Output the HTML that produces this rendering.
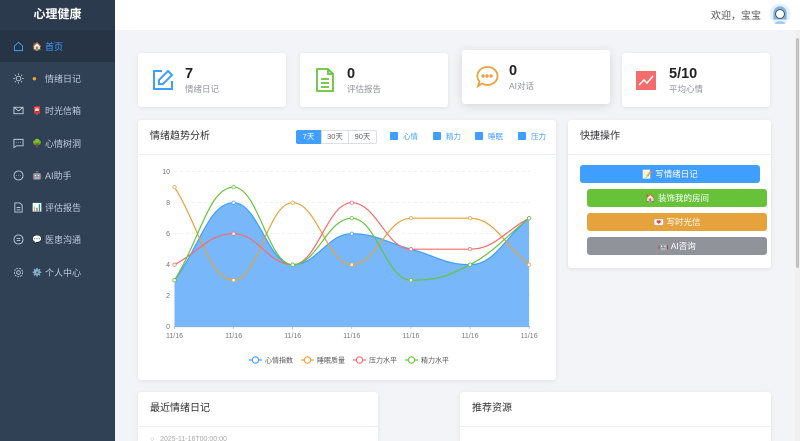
<!DOCTYPE html>
<html style="height:441px;overflow:hidden"><head><meta charset="utf-8">
<style>
*{margin:0;padding:0;box-sizing:border-box}
body{width:800px;height:441px;overflow:hidden;font-family:"Liberation Sans","Noto Sans CJK SC",sans-serif;background:#f3f4f7;position:relative;font-size:9px;color:#303133}
.side{position:absolute;left:0;top:0;width:115px;height:441px;background:#304156}
.logo{height:30px;background:#2b3a4d;color:#fff;font-weight:bold;font-size:12px;text-align:center;line-height:28px}
.mi{height:32.3px;display:flex;align-items:center;padding-left:13px;color:#bfcbd9;font-size:9px}
.mi.act{background:#263445;color:#409eff}
.mi svg{width:11px;height:11px;margin-right:8px;flex:none}
.mi .em{font-size:8px;margin-right:3px;display:inline-block;width:10px}
.top{position:absolute;left:115px;top:0;right:0;height:30px;background:#fff}
.card{position:absolute;background:#fff;border-radius:3px;box-shadow:0 1px 5px rgba(0,0,0,.08);overflow:hidden}
.stat{height:54px;display:flex;align-items:center}
.stat .ic{width:24px;height:24px;margin:0 10px 0 13px}
.stat b{font-size:14.5px;display:block;color:#222;line-height:17px}
.stat span{font-size:8.5px;color:#909399}
.hd{height:35px;border-bottom:1px solid #ebeef5;padding-left:12px;line-height:33px;font-size:10px;color:#303133}
.qb{position:absolute;height:18px;border-radius:3px;color:#fff;font-size:8.5px;text-align:center;line-height:18px}
</style></head><body>
<div class="side">
<div class="logo">心理健康</div>
<div class="mi act"><svg viewBox="0 0 12 12" fill="none" stroke="#409eff" stroke-width="1"><path d="M1.5 5.5L6 1.5l4.5 4v5h-9z"/></svg><span class="em">🏠</span>首页</div>
<div class="mi"><svg viewBox="0 0 12 12" fill="none" stroke="#bfcbd9" stroke-width="1"><circle cx="6" cy="6" r="2.5"/><path d="M6 0.5v1.5M6 10v1.5M0.5 6h1.5M10 6h1.5M2 2l1 1M9 9l1 1M2 10l1-1M9 3l1-1"/></svg><span class="em" style="color:#f5a623">●</span>情绪日记</div>
<div class="mi"><svg viewBox="0 0 12 12" fill="none" stroke="#bfcbd9" stroke-width="1"><rect x="1" y="2.5" width="10" height="7"/><path d="M1 2.5l5 4 5-4"/></svg><span class="em">📮</span>时光信箱</div>
<div class="mi"><svg viewBox="0 0 12 12" fill="none" stroke="#bfcbd9" stroke-width="1"><path d="M1 1.5h10v7H4l-3 2z"/><path d="M3.5 5h.5M5.8 5h.5M8 5h.5"/></svg><span class="em">🌳</span>心情树洞</div>
<div class="mi"><svg viewBox="0 0 12 12" fill="none" stroke="#bfcbd9" stroke-width="1"><circle cx="6" cy="6" r="5"/><path d="M3.5 6h.5M5.8 6h.5M8 6h.5"/></svg><span class="em">🤖</span>AI助手</div>
<div class="mi"><svg viewBox="0 0 12 12" fill="none" stroke="#bfcbd9" stroke-width="1"><path d="M2 1h5.5L10 3.5V11H2z"/><path d="M4 6h4M4 8.5h4"/></svg><span class="em">📊</span>评估报告</div>
<div class="mi"><svg viewBox="0 0 12 12" fill="none" stroke="#bfcbd9" stroke-width="1"><circle cx="6" cy="6" r="5"/><path d="M4 5h4M4 7h4"/></svg><span class="em">💬</span>医患沟通</div>
<div class="mi"><svg viewBox="0 0 12 12" fill="none" stroke="#bfcbd9" stroke-width="1"><circle cx="6" cy="6" r="2"/><circle cx="6" cy="6" r="4.6" stroke-dasharray="2 1.2"/></svg><span class="em">⚙️</span>个人中心</div>
</div>
<div class="top">
<div style="position:absolute;left:596px;top:7px;font-size:10px;color:#555">欢迎，宝宝</div>
<svg style="position:absolute;left:654px;top:3px" width="22" height="22" viewBox="0 0 20 20"><circle cx="10" cy="10" r="9.5" fill="#e8f1fb"/><path d="M4 9a6 6 0 0 1 12 0v6H4z" fill="#7fb3e0"/><circle cx="10" cy="10" r="4" fill="#fff" stroke="#333" stroke-width=".7"/><path d="M5 19c1-3 9-3 10 0" fill="#9cc6ec"/></svg>
</div>
<div style="position:absolute;right:0;top:30px;width:5px;height:411px;background:#f0f0f0"></div>
<div style="position:absolute;right:1px;top:38px;width:3px;height:230px;background:#c1c1c1;border-radius:2px"></div>

<div class="card stat" style="left:138px;top:53px;width:148px"><svg class="ic" viewBox="0 0 24 24" fill="none" stroke="#409eff" stroke-width="2"><path d="M11 3H3v18h18v-8"/><path d="M17 3l4 4-9 9H8v-4z"/></svg><div><b>7</b><span>情绪日记</span></div></div>
<div class="card stat" style="left:300px;top:53px;width:148px"><svg class="ic" viewBox="0 0 24 24" fill="none" stroke="#67c23a" stroke-width="1.8"><path d="M4 1h11l5 5v17H4z"/><path d="M15 1v5h5M8 11h8M8 15h8M8 19h8"/></svg><div><b>0</b><span>评估报告</span></div></div>
<div class="card stat" style="left:462px;top:50px;width:148px;box-shadow:0 2px 10px rgba(0,0,0,.12)"><svg class="ic" viewBox="0 0 24 24" fill="none" stroke="#e6a23c" stroke-width="1.8"><path d="M12 2a10 9 0 1 1-5 16.5L3 21l1.5-4.5A10 9 0 0 1 12 2z"/><circle cx="8" cy="11" r=".8" fill="#e6a23c"/><circle cx="12" cy="11" r=".8" fill="#e6a23c"/><circle cx="16" cy="11" r=".8" fill="#e6a23c"/></svg><div><b>0</b><span>AI对话</span></div></div>
<div class="card stat" style="left:622px;top:53px;width:148px"><svg class="ic" viewBox="0 0 24 24"><rect x="1" y="3" width="20" height="19" fill="#f56c6c"/><path d="M4 17l5-5 3 3 6-7" stroke="#fff" stroke-width="1.5" fill="none"/></svg><div><b>5/10</b><span>平均心情</span></div></div>

<div class="card" style="left:138px;top:120px;width:418px;height:260px">
<div class="hd">情绪趋势分析</div>
<div style="position:absolute;left:158px;top:10px;display:flex;font-size:7.5px;color:#606266">
<div style="width:25px;height:14px;background:#409eff;color:#fff;text-align:center;line-height:14px;border-radius:2px 0 0 2px">7天</div>
<div style="width:28px;height:14px;border:1px solid #dcdfe6;text-align:center;line-height:12px">30天</div>
<div style="width:28px;height:14px;border:1px solid #dcdfe6;border-left:none;text-align:center;line-height:12px;border-radius:0 2px 2px 0">90天</div>
</div>
<div style="position:absolute;left:252px;top:11px;font-size:7.5px;color:#409eff;display:flex;gap:0">
<span style="width:43px"><i style="display:inline-block;width:8px;height:8px;background:#409eff;border-radius:1px;vertical-align:-1px;margin-right:5px"></i>心情</span>
<span style="width:42px"><i style="display:inline-block;width:8px;height:8px;background:#409eff;border-radius:1px;vertical-align:-1px;margin-right:5px"></i>精力</span>
<span style="width:43px"><i style="display:inline-block;width:8px;height:8px;background:#409eff;border-radius:1px;vertical-align:-1px;margin-right:5px"></i>睡眠</span>
<span><i style="display:inline-block;width:8px;height:8px;background:#409eff;border-radius:1px;vertical-align:-1px;margin-right:5px"></i>压力</span>
</div>
</div>
<svg id="ch" style="position:absolute;left:0;top:0" width="800" height="441"></svg>

<div class="card" style="left:568px;top:120px;width:203px;height:148px">
<div class="hd">快捷操作</div>
<div class="qb" style="left:12px;top:45px;width:180px;background:#409eff">📝 写情绪日记</div>
<div class="qb" style="left:19px;top:69px;width:180px;background:#67c23a">🏠 装饰我的房间</div>
<div class="qb" style="left:19px;top:93px;width:180px;background:#e6a23c">💌 写时光信</div>
<div class="qb" style="left:19px;top:117px;width:180px;background:#909399">🤖 AI咨询</div>
</div>

<div class="card" style="left:138px;top:392px;width:240px;height:49px;border-radius:3px 3px 0 0">
<div class="hd">最近情绪日记</div>
<div style="position:absolute;left:12px;top:44px;font-size:7px;color:#aaa">○ &nbsp;&nbsp;2025-11-16T00:00:00</div>
</div>
<div class="card" style="left:460px;top:392px;width:311px;height:49px;border-radius:3px 3px 0 0"><div class="hd">推荐资源</div></div>

<script>
var s=document.getElementById('ch'),h='';
var X=function(i){return 174.5+i*59.1},Y=function(v){return 326.7-v*15.5};
for(var v=0;v<=10;v+=2){h+='<line x1="174" x2="530" y1="'+Y(v)+'" y2="'+Y(v)+'" stroke="#e6e6e6" stroke-width="0.6" stroke-dasharray="3 3"/>';h+='<text x="170" y="'+(Y(v)+2.5)+'" font-size="7" fill="#777" text-anchor="end">'+v+'</text>';}
for(var i=0;i<7;i++){h+='<text x="'+X(i)+'" y="338" font-size="7" fill="#777" text-anchor="middle">11/16</text><line x1="'+X(i)+'" x2="'+X(i)+'" y1="326.7" y2="329" stroke="#999" stroke-width=".6"/>';}
h+='<line x1="174" x2="530" y1="326.7" y2="326.7" stroke="#aaa" stroke-width=".8"/>';
function path(d){var p='M'+X(0)+' '+Y(d[0]);for(var i=0;i<6;i++){var dx=59.1*0.42;
function sl(k){if(k==0)return (d[1]-d[0]);if(k==6)return (d[6]-d[5]);if((d[k]-d[k-1])*(d[k+1]-d[k])<=0)return 0;return (d[k+1]-d[k-1])/2;}
var a=sl(i),b=sl(i+1);p+=' C'+(X(i)+dx)+' '+Y(d[i]+a*0.42)+' '+(X(i+1)-dx)+' '+Y(d[i+1]-b*0.42)+' '+X(i+1)+' '+Y(d[i+1]);}return p;}
var M=[3,8,4,6,5,4,7],S=[9,3,8,4,7,7,4],P=[4,6,4,8,5,5,7],E=[3,9,4,7,3,4,7];
h+='<path d="'+path(M)+' L'+X(6)+' 326.7 L'+X(0)+' 326.7Z" fill="#78b7fa"/>';
[[M,'#409eff'],[S,'#e6a23c'],[P,'#f56c6c'],[E,'#67c23a']].forEach(function(q){h+='<path d="'+path(q[0])+'" fill="none" stroke="'+q[1]+'" stroke-width="1.2"/>';for(var i=0;i<7;i++)h+='<circle cx="'+X(i)+'" cy="'+Y(q[0][i])+'" r="1.7" fill="#fff" stroke="'+q[1]+'" stroke-width=".8"/>';});
var L=[['心情指数','#409eff',249],['睡眠质量','#e6a23c',301],['压力水平','#f56c6c',353],['精力水平','#67c23a',405]];
L.forEach(function(l){h+='<line x1="'+l[2]+'" x2="'+(l[2]+13)+'" y1="360" y2="360" stroke="'+l[1]+'" stroke-width="1.2"/><circle cx="'+(l[2]+6.5)+'" cy="360" r="3.2" fill="#fff" stroke="'+l[1]+'" stroke-width="1.1"/><text x="'+(l[2]+16)+'" y="362.5" font-size="7" fill="#555">'+l[0]+'</text>';});
s.innerHTML=h;
</script>
</body></html>
